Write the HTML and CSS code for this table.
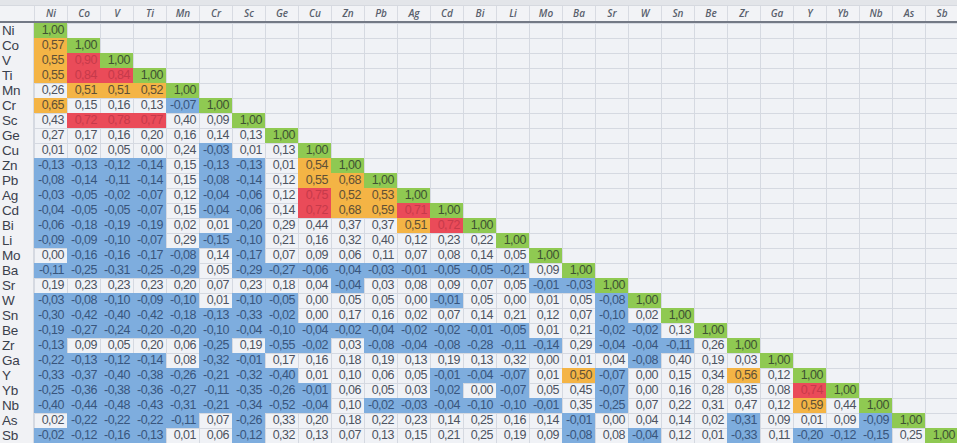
FILE: index.html
```html
<!DOCTYPE html>
<html lang="en">
<head>
<meta charset="utf-8">
<title>Correlation matrix</title>
<link rel="stylesheet" href="styles.css">
</head>
<body>
<div class="sheet">
  <div class="band"></div>
  <div class="head">
    <div></div>
    <div>Ni</div><div>Co</div><div>V</div><div>Ti</div><div>Mn</div><div>Cr</div><div>Sc</div><div>Ge</div><div>Cu</div><div>Zn</div><div>Pb</div><div>Ag</div><div>Cd</div><div>Bi</div><div>Li</div><div>Mo</div><div>Ba</div><div>Sr</div><div>W</div><div>Sn</div><div>Be</div><div>Zr</div><div>Ga</div><div>Y</div><div>Yb</div><div>Nb</div><div>As</div><div>Sb</div>
  </div>
  <div class="body">
    <div class="rh">Ni</div><div class="g">1,00</div>
    <div class="rh">Co</div><div class="o">0,57</div><div class="g">1,00</div>
    <div class="rh">V</div><div class="o">0,55</div><div class="r">0,90</div><div class="g">1,00</div>
    <div class="rh">Ti</div><div class="o">0,55</div><div class="r">0,84</div><div class="r">0,84</div><div class="g">1,00</div>
    <div class="rh">Mn</div><div>0,26</div><div class="o">0,51</div><div class="o">0,51</div><div class="o">0,52</div><div class="g">1,00</div>
    <div class="rh">Cr</div><div class="o">0,65</div><div>0,15</div><div>0,16</div><div>0,13</div><div class="b">-0,07</div><div class="g">1,00</div>
    <div class="rh">Sc</div><div>0,43</div><div class="r">0,72</div><div class="r">0,78</div><div class="r">0,77</div><div>0,40</div><div>0,09</div><div class="g">1,00</div>
    <div class="rh">Ge</div><div>0,27</div><div>0,17</div><div>0,16</div><div>0,20</div><div>0,16</div><div>0,14</div><div>0,13</div><div class="g">1,00</div>
    <div class="rh">Cu</div><div>0,01</div><div>0,02</div><div>0,05</div><div>0,00</div><div>0,24</div><div class="b">-0,03</div><div>0,01</div><div>0,13</div><div class="g">1,00</div>
    <div class="rh">Zn</div><div class="b">-0,13</div><div class="b">-0,13</div><div class="b">-0,12</div><div class="b">-0,14</div><div>0,15</div><div class="b">-0,13</div><div class="b">-0,13</div><div>0,01</div><div class="o">0,54</div><div class="g">1,00</div>
    <div class="rh">Pb</div><div class="b">-0,08</div><div class="b">-0,14</div><div class="b">-0,11</div><div class="b">-0,14</div><div>0,15</div><div class="b">-0,08</div><div class="b">-0,14</div><div>0,12</div><div class="o">0,55</div><div class="o">0,68</div><div class="g">1,00</div>
    <div class="rh">Ag</div><div class="b">-0,03</div><div class="b">-0,05</div><div class="b">-0,02</div><div class="b">-0,07</div><div>0,12</div><div class="b">-0,04</div><div class="b">-0,06</div><div>0,12</div><div class="r">0,75</div><div class="o">0,52</div><div class="o">0,53</div><div class="g">1,00</div>
    <div class="rh">Cd</div><div class="b">-0,04</div><div class="b">-0,05</div><div class="b">-0,05</div><div class="b">-0,07</div><div>0,15</div><div class="b">-0,04</div><div class="b">-0,06</div><div>0,14</div><div class="r">0,72</div><div class="o">0,68</div><div class="o">0,59</div><div class="r">0,71</div><div class="g">1,00</div>
    <div class="rh">Bi</div><div class="b">-0,06</div><div class="b">-0,18</div><div class="b">-0,19</div><div class="b">-0,19</div><div>0,02</div><div>0,01</div><div class="b">-0,20</div><div>0,29</div><div>0,44</div><div>0,37</div><div>0,37</div><div class="o">0,51</div><div class="r">0,72</div><div class="g">1,00</div>
    <div class="rh">Li</div><div class="b">-0,09</div><div class="b">-0,09</div><div class="b">-0,10</div><div class="b">-0,07</div><div>0,29</div><div class="b">-0,15</div><div class="b">-0,10</div><div>0,21</div><div>0,16</div><div>0,32</div><div>0,40</div><div>0,12</div><div>0,23</div><div>0,22</div><div class="g">1,00</div>
    <div class="rh">Mo</div><div>0,00</div><div class="b">-0,16</div><div class="b">-0,16</div><div class="b">-0,17</div><div class="b">-0,08</div><div>0,14</div><div class="b">-0,17</div><div>0,07</div><div>0,09</div><div>0,06</div><div>0,11</div><div>0,07</div><div>0,08</div><div>0,14</div><div>0,05</div><div class="g">1,00</div>
    <div class="rh">Ba</div><div class="b">-0,11</div><div class="b">-0,25</div><div class="b">-0,31</div><div class="b">-0,25</div><div class="b">-0,29</div><div>0,05</div><div class="b">-0,29</div><div class="b">-0,27</div><div class="b">-0,06</div><div class="b">-0,04</div><div class="b">-0,03</div><div class="b">-0,01</div><div class="b">-0,05</div><div class="b">-0,05</div><div class="b">-0,21</div><div>0,09</div><div class="g">1,00</div>
    <div class="rh">Sr</div><div>0,19</div><div>0,23</div><div>0,23</div><div>0,23</div><div>0,20</div><div>0,07</div><div>0,23</div><div>0,18</div><div>0,04</div><div class="b">-0,04</div><div>0,03</div><div>0,08</div><div>0,09</div><div>0,07</div><div>0,05</div><div class="b">-0,01</div><div class="b">-0,03</div><div class="g">1,00</div>
    <div class="rh">W</div><div class="b">-0,03</div><div class="b">-0,08</div><div class="b">-0,10</div><div class="b">-0,09</div><div class="b">-0,10</div><div>0,01</div><div class="b">-0,10</div><div class="b">-0,05</div><div>0,00</div><div>0,05</div><div>0,05</div><div>0,00</div><div class="b">-0,01</div><div>0,05</div><div>0,00</div><div>0,01</div><div>0,05</div><div class="b">-0,08</div><div class="g">1,00</div>
    <div class="rh">Sn</div><div class="b">-0,30</div><div class="b">-0,42</div><div class="b">-0,40</div><div class="b">-0,42</div><div class="b">-0,18</div><div class="b">-0,13</div><div class="b">-0,33</div><div class="b">-0,02</div><div>0,00</div><div>0,17</div><div>0,16</div><div>0,02</div><div>0,07</div><div>0,14</div><div>0,21</div><div>0,12</div><div>0,07</div><div class="b">-0,10</div><div>0,02</div><div class="g">1,00</div>
    <div class="rh">Be</div><div class="b">-0,19</div><div class="b">-0,27</div><div class="b">-0,24</div><div class="b">-0,20</div><div class="b">-0,20</div><div class="b">-0,10</div><div class="b">-0,04</div><div class="b">-0,10</div><div class="b">-0,04</div><div class="b">-0,02</div><div class="b">-0,04</div><div class="b">-0,02</div><div class="b">-0,02</div><div class="b">-0,01</div><div class="b">-0,05</div><div>0,01</div><div>0,21</div><div class="b">-0,02</div><div class="b">-0,02</div><div>0,13</div><div class="g">1,00</div>
    <div class="rh">Zr</div><div class="b">-0,13</div><div>0,09</div><div>0,05</div><div>0,20</div><div>0,06</div><div class="b">-0,25</div><div>0,19</div><div class="b">-0,55</div><div class="b">-0,02</div><div>0,03</div><div class="b">-0,08</div><div class="b">-0,04</div><div class="b">-0,08</div><div class="b">-0,28</div><div class="b">-0,11</div><div class="b">-0,14</div><div>0,29</div><div class="b">-0,04</div><div class="b">-0,04</div><div class="b">-0,11</div><div>0,26</div><div class="g">1,00</div>
    <div class="rh">Ga</div><div class="b">-0,22</div><div class="b">-0,13</div><div class="b">-0,12</div><div class="b">-0,14</div><div>0,08</div><div class="b">-0,32</div><div class="b">-0,01</div><div>0,17</div><div>0,16</div><div>0,18</div><div>0,19</div><div>0,13</div><div>0,19</div><div>0,13</div><div>0,32</div><div>0,00</div><div>0,01</div><div>0,04</div><div class="b">-0,08</div><div>0,40</div><div>0,19</div><div>0,03</div><div class="g">1,00</div>
    <div class="rh">Y</div><div class="b">-0,33</div><div class="b">-0,37</div><div class="b">-0,40</div><div class="b">-0,38</div><div class="b">-0,26</div><div class="b">-0,21</div><div class="b">-0,32</div><div class="b">-0,40</div><div>0,01</div><div>0,10</div><div>0,06</div><div>0,05</div><div class="b">-0,01</div><div class="b">-0,04</div><div class="b">-0,07</div><div>0,01</div><div class="o">0,50</div><div class="b">-0,07</div><div>0,00</div><div>0,15</div><div>0,34</div><div class="o">0,56</div><div>0,12</div><div class="g">1,00</div>
    <div class="rh">Yb</div><div class="b">-0,25</div><div class="b">-0,36</div><div class="b">-0,38</div><div class="b">-0,36</div><div class="b">-0,27</div><div class="b">-0,11</div><div class="b">-0,35</div><div class="b">-0,26</div><div class="b">-0,01</div><div>0,06</div><div>0,05</div><div>0,03</div><div class="b">-0,02</div><div>0,00</div><div class="b">-0,07</div><div>0,05</div><div>0,45</div><div class="b">-0,07</div><div>0,00</div><div>0,16</div><div>0,28</div><div>0,35</div><div>0,08</div><div class="r">0,74</div><div class="g">1,00</div>
    <div class="rh">Nb</div><div class="b">-0,40</div><div class="b">-0,44</div><div class="b">-0,48</div><div class="b">-0,43</div><div class="b">-0,31</div><div class="b">-0,21</div><div class="b">-0,34</div><div class="b">-0,52</div><div class="b">-0,04</div><div>0,10</div><div class="b">-0,02</div><div class="b">-0,03</div><div class="b">-0,04</div><div class="b">-0,10</div><div class="b">-0,10</div><div class="b">-0,01</div><div>0,35</div><div class="b">-0,25</div><div>0,07</div><div>0,22</div><div>0,31</div><div>0,47</div><div>0,12</div><div class="o">0,59</div><div>0,44</div><div class="g">1,00</div>
    <div class="rh">As</div><div>0,02</div><div class="b">-0,22</div><div class="b">-0,22</div><div class="b">-0,22</div><div class="b">-0,11</div><div>0,07</div><div class="b">-0,26</div><div>0,33</div><div>0,20</div><div>0,18</div><div>0,22</div><div>0,23</div><div>0,14</div><div>0,25</div><div>0,16</div><div>0,14</div><div class="b">-0,01</div><div>0,00</div><div>0,04</div><div>0,14</div><div>0,02</div><div class="b">-0,31</div><div>0,09</div><div>0,01</div><div>0,09</div><div class="b">-0,09</div><div class="g">1,00</div>
    <div class="rh">Sb</div><div class="b">-0,02</div><div class="b">-0,12</div><div class="b">-0,16</div><div class="b">-0,13</div><div>0,01</div><div>0,06</div><div class="b">-0,12</div><div>0,32</div><div>0,13</div><div>0,07</div><div>0,13</div><div>0,15</div><div>0,21</div><div>0,25</div><div>0,19</div><div>0,09</div><div class="b">-0,08</div><div>0,08</div><div class="b">-0,04</div><div>0,12</div><div>0,01</div><div class="b">-0,33</div><div>0,11</div><div class="b">-0,20</div><div class="b">-0,12</div><div class="b">-0,15</div><div>0,25</div><div class="g">1,00</div>
  </div>
</div>
</body>
</html>
```

FILE: styles.css
```css
html, body {
  margin: 0;
  padding: 0;
  background: #eceef2;
}

.sheet {
  width: 957px;
  height: 443px;
  overflow: hidden;
  background: #eff1f5;
  display: flex;
  flex-direction: column;
}

.band {
  height: 5px;
  flex: none;
  background: #e3e5e9;
  border-bottom: 1px solid #d6d9df;
}

.head {
  flex: none;
  display: grid;
  grid-template-columns: 34px repeat(28, 33px);
  height: 15px;
  border-bottom: 2px solid #737985;
  background: #f2f3f6;
}

.head > div {
  border-left: 1px solid #d8dbe2;
  font-family: "Open Sans", "DejaVu Sans", sans-serif;
  font-style: italic;
  font-weight: 600;
  font-size: 10px;
  line-height: 15px;
  color: #59606c;
  text-align: center;
}

.head > div:first-child {
  border-left: none;
}

.body {
  flex: none;
  display: grid;
  grid-template-columns: 34px repeat(28, 33px);
  grid-auto-rows: 15px;
  background-color: #f0f2f6;
  background-image:
    linear-gradient(to right, #d5d9e1 1px, transparent 1px),
    linear-gradient(to bottom, #d5d9e1 1px, transparent 1px);
  background-size: 33px 15px, 33px 15px;
  background-position: 34px 0, 0 0;
  border-bottom: 1px solid #8a8f99;
}

.body > div {
  font-family: "Liberation Sans Narrow", "Liberation Sans", sans-serif;
  font-size: 12.5px;
  letter-spacing: -0.5px;
  line-height: 15px;
  color: #4d5361;
  text-align: right;
  padding-right: 3px;
  white-space: nowrap;
}

.body > .rh {
  grid-column: 1;
  text-align: left;
  padding: 0 0 0 2px;
  font-size: 13.5px;
  letter-spacing: -0.3px;
  color: #3a404c;
  background: #f1f2f5;
  border-right: 1px solid #d5d9e1;
}

.body > .g {
  background: #8fc952;
  color: #3e5232;
}

.body > .o {
  background: #f4b445;
  color: #5f5035;
}

.body > .r {
  background: #ea4b59;
  color: #c63a4a;
}

.body > .b {
  background: #7eadde;
  color: #38557d;
}
```
